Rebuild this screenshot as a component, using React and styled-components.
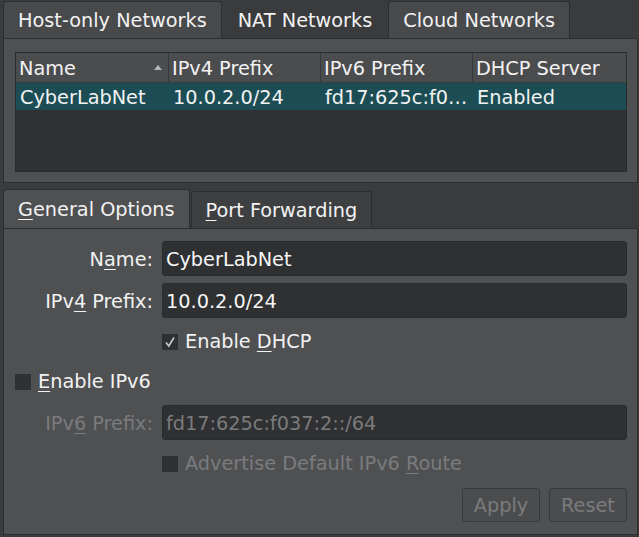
import React from "react";
import styled, { createGlobalStyle } from "styled-components";

const GlobalStyle = createGlobalStyle`
  html, body {
    margin: 0;
    padding: 0;
    background: #3a3b3d;
  }
  body {
    font-family: "DejaVu Sans", Verdana, sans-serif;
    font-size: 19.3px;
    color: #f2f2f2;
  }
`;

const Window = styled.div`
  width: 639px;
  height: 537px;
  display: flex;
  flex-direction: column;
  background: #3a3b3d;
  overflow: hidden;
`;

const TabBar = styled.div`
  display: flex;
  align-items: flex-end;
  height: ${(p) => p.$height}px;
  padding-left: 3px;
  margin-top: ${(p) => p.$top || 0}px;
  flex-shrink: 0;
`;

const Tab = styled.div`
  box-sizing: border-box;
  height: ${(p) => (p.$active ? "100%" : "calc(100% - " + p.$drop + "px)")};
  padding: 1px 14px 0 14px;
  display: flex;
  align-items: center;
  white-space: nowrap;
  border: 1px solid ${(p) => (p.$active && p.$flat ? "transparent" : "#2c2d2f")};
  border-bottom: none;
  border-radius: 3px 3px 0 0;
  margin-right: 1px;
  background: ${(p) => p.$bg};
  color: #f2f2f2;
`;

const Pane = styled.div`
  box-sizing: border-box;
  margin: 0 1px 0 3px;
  border: 1px solid #2c2d2f;
  background: #4f5052;
`;

const TopPane = styled(Pane)`
  height: 145px;
  padding: 13px 10px 10px 11px;
  flex-shrink: 0;
`;

const BottomPane = styled(Pane)`
  flex: 1;
  margin-bottom: 2px;
  padding: 12px 10px 0 11px;
`;

const Table = styled.div`
  height: 100%;
  box-sizing: border-box;
  border: 1px solid #2a2b2d;
  background: #303133;
  display: flex;
  flex-direction: column;
`;

const Row = styled.div`
  display: grid;
  grid-template-columns: 153px 152px 152px 1fr;
  height: ${(p) => p.$h}px;
  background: ${(p) => p.$bg};
`;

const HeadCell = styled.div`
  position: relative;
  display: flex;
  align-items: center;
  padding: 1px 0 0 3px;
  border-right: 1px solid #38393b;
  border-bottom: 1px solid #38393b;
  white-space: nowrap;
  overflow: hidden;
  &:last-child {
    border-right: none;
  }
`;

const SortArrow = styled.span`
  position: absolute;
  right: 6px;
  top: 12px;
  width: 0;
  height: 0;
  border-left: 4px solid transparent;
  border-right: 4px solid transparent;
  border-bottom: 5px solid #b4b5b7;
`;

const Cell = styled.div`
  display: flex;
  align-items: center;
  padding: 1px 4px 0 4px;
  white-space: nowrap;
  overflow: hidden;
  min-width: 0;
`;

const Form = styled.div`
  display: grid;
  grid-template-columns: 138px 1fr;
  column-gap: 9px;
  row-gap: 7px;
`;

const Label = styled.label`
  display: flex;
  align-items: center;
  justify-content: flex-end;
  padding-top: 1px;
  color: ${(p) => (p.$disabled ? "#7a7b7d" : "#f2f2f2")};
  white-space: nowrap;
`;

const Input = styled.div`
  height: 35px;
  box-sizing: border-box;
  border-radius: 3px;
  background: #2f3032;
  border: 1px solid #2a2b2d;
  display: flex;
  align-items: center;
  padding: 1px 0 0 3px;
  color: ${(p) => (p.$disabled ? "#7a7b7d" : "#f6f6f6")};
`;

const CheckRow = styled.div`
  grid-column: ${(p) => (p.$full ? "1 / 3" : "2 / 3")};
  height: 33px;
  display: flex;
  align-items: center;
  gap: 7px;
  color: ${(p) => (p.$disabled ? "#7a7b7d" : "#f2f2f2")};
`;

const Box = styled.span`
  width: 16px;
  height: 16px;
  background: #2f3032;
  display: flex;
  align-items: center;
  justify-content: center;
  flex-shrink: 0;
`;

const U = styled.span`
  text-decoration: underline;
  text-underline-offset: 3px;
  text-decoration-thickness: 1px;
`;

const ButtonRow = styled.div`
  grid-column: 1 / 3;
  display: flex;
  justify-content: flex-end;
  gap: 9px;
  margin-top: 1px;
`;

const Button = styled.button`
  width: 78px;
  height: 34px;
  box-sizing: border-box;
  border: 1px solid #38393b;
  border-radius: 3px;
  background: #4b4c4e;
  color: #7a7b7d;
  font-family: inherit;
  font-size: inherit;
  padding: 1px 0 0 0;
`;

const Check = () => (
  <svg width="12" height="12" viewBox="0 0 12 12">
    <path d="M2 6.5 L4.8 10 L10 1.5" fill="none" stroke="#c8c9cb" strokeWidth="1.6" />
  </svg>
);

export default function App() {
  return (
    <Window>
      <GlobalStyle />
      <TabBar $height={38}>
        <Tab $drop={1} $bg="#48494b">Host-only Networks</Tab>
        <Tab $active $flat $bg="transparent">NAT Networks</Tab>
        <Tab $drop={1} $bg="#48494b">Cloud Networks</Tab>
      </TabBar>
      <TopPane>
        <Table>
          <Row $h={30} $bg="#4b4c4e">
            <HeadCell>
              Name
              <SortArrow />
            </HeadCell>
            <HeadCell>IPv4 Prefix</HeadCell>
            <HeadCell>IPv6 Prefix</HeadCell>
            <HeadCell>DHCP Server</HeadCell>
          </Row>
          <Row $h={27} $bg="#1c4d55">
            <Cell>CyberLabNet</Cell>
            <Cell>10.0.2.0/24</Cell>
            <Cell title="fd17:625c:f037:2::/64">fd17:625c:f0…</Cell>
            <Cell>Enabled</Cell>
          </Row>
        </Table>
      </TopPane>
      <TabBar $height={39} $top={6}>
        <Tab $active $bg="#4f5052">
          <span>
            <U>G</U>eneral Options
          </span>
        </Tab>
        <Tab $drop={2} $bg="#3e3f41">
          <span>
            <U>P</U>ort Forwarding
          </span>
        </Tab>
      </TabBar>
      <BottomPane>
        <Form>
          <Label>
            <span>
              N<U>a</U>me:
            </span>
          </Label>
          <Input>CyberLabNet</Input>
          <Label>
            <span>
              IPv<U>4</U> Prefix:
            </span>
          </Label>
          <Input>10.0.2.0/24</Input>
          <CheckRow>
            <Box>
              <Check />
            </Box>
            <span>
              Enable <U>D</U>HCP
            </span>
          </CheckRow>
          <CheckRow $full>
            <Box />
            <span>
              <U>E</U>nable IPv6
            </span>
          </CheckRow>
          <Label $disabled>
            <span>
              IPv<U>6</U> Prefix:
            </span>
          </Label>
          <Input $disabled>fd17:625c:f037:2::/64</Input>
          <CheckRow $disabled>
            <Box />
            <span>
              Advertise Default IPv6 <U>R</U>oute
            </span>
          </CheckRow>
          <ButtonRow>
            <Button disabled>Apply</Button>
            <Button disabled>Reset</Button>
          </ButtonRow>
        </Form>
      </BottomPane>
    </Window>
  );
}
